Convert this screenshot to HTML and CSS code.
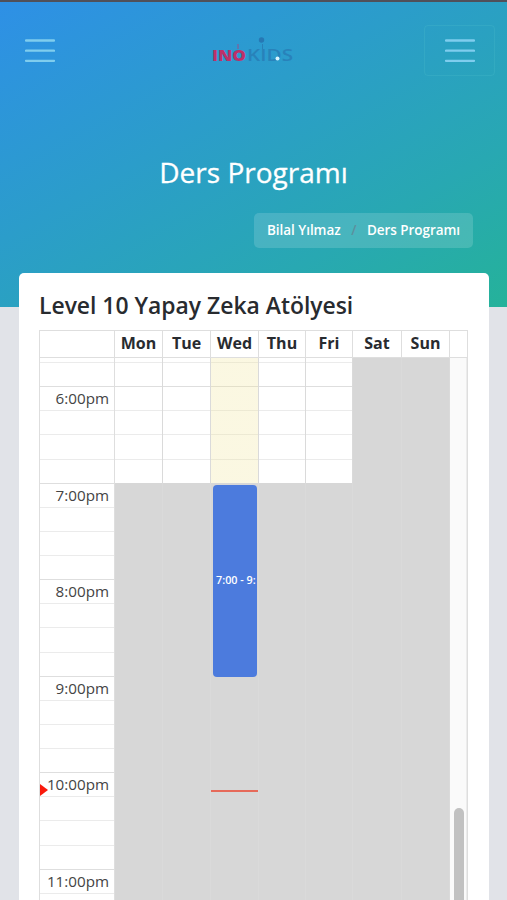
FILE: index.html
```html
<!DOCTYPE html>
<html lang="tr">
<head>
    <meta charset="UTF-8">
    <meta name="viewport" content="width=device-width, initial-scale=1.0">
    <title>Ders Programı</title>
    <link rel="stylesheet" href="styles.css">
</head>
<body>

<header class="hero">
    <nav class="navbar">
        <button class="toggler" aria-label="Menu">
            <svg width="30" height="26" viewBox="0 0 30 26"><path d="M1 2.5H29M1 12.7H29M1 22.8H29"/></svg>
        </button>
        <svg class="logo" width="84" height="28" viewBox="0 0 84 28">
            <text class="logo-ino" x="0" y="23.5" textLength="34" lengthAdjust="spacingAndGlyphs">INO</text>
            <text class="logo-kids" x="35" y="23.5" textLength="46" lengthAdjust="spacingAndGlyphs">KIDS</text>
            <path class="logo-ino-stem" d="M26 7V12"/>
            <path class="logo-kids-stem" d="M50.5 7V12"/>
            <circle class="logo-ball" cx="49.5" cy="3" r="2.7"/>
            <circle class="logo-dot" cx="65.5" cy="21.5" r="2"/>
        </svg>
        <button class="toggler toggler-boxed" aria-label="Menu">
            <svg width="30" height="26" viewBox="0 0 30 26"><path d="M1 2.5H29M1 12.7H29M1 22.8H29"/></svg>
        </button>
    </nav>
    <h1>Ders Programı</h1>
    <div class="breadcrumb">
        <span>Bilal Yılmaz</span>
        <span class="separator">/</span>
        <span>Ders Programı</span>
    </div>
</header>

<main class="card">
    <h2>Level 10 Yapay Zeka Atölyesi</h2>
    <div class="calendar">
        <div class="calendar-head">
            <div></div>
            <div>Mon</div>
            <div>Tue</div>
            <div>Wed</div>
            <div>Thu</div>
            <div>Fri</div>
            <div>Sat</div>
            <div>Sun</div>
            <div></div>
        </div>
        <div class="calendar-body">
            <div class="slots">
                <div class="slot slot-cut"></div>
                <div class="slot"></div>
                <div class="slot hour"><span>6:00pm</span></div>
                <div class="slot"></div>
                <div class="slot"></div>
                <div class="slot"></div>
                <div class="slot hour"><span>7:00pm</span></div>
                <div class="slot"></div>
                <div class="slot"></div>
                <div class="slot"></div>
                <div class="slot hour"><span>8:00pm</span></div>
                <div class="slot"></div>
                <div class="slot"></div>
                <div class="slot"></div>
                <div class="slot hour"><span>9:00pm</span></div>
                <div class="slot"></div>
                <div class="slot"></div>
                <div class="slot"></div>
                <div class="slot hour"><span>10:00pm</span></div>
                <div class="slot"></div>
                <div class="slot"></div>
                <div class="slot"></div>
                <div class="slot hour"><span>11:00pm</span></div>
                <div class="slot"></div>
            </div>
            <div class="days">
                <div class="axis"><i class="now-arrow"></i></div>
                <div class="day"></div>
                <div class="day"></div>
                <div class="day today">
                    <div class="event">7:00 - 9:</div>
                    <i class="now-line"></i>
                </div>
                <div class="day"></div>
                <div class="day"></div>
                <div class="day closed"></div>
                <div class="day closed"></div>
                <div class="scroll-track"><div class="scroll-thumb"></div></div>
            </div>
        </div>
    </div>
</main>

</body>
</html>
```

FILE: styles.css
```css
* {
    box-sizing: border-box;
}

body {
    font-family: "Open Sans", sans-serif;
    margin: 0;
    height: 900px;
    overflow: hidden;
    background-color: #e1e3e8;
    color: #282b2f;
}

.hero {
    height: 307px;
    border-top: 2px solid #50505a;
    background: linear-gradient(150deg, #2e90e6 0%, #2b9dca 40%, #28a8b2 73%, #25b29a 100%);
    color: white;
}

.navbar {
    display: flex;
    justify-content: space-between;
    align-items: center;
    height: 97px;
    padding: 0 12px 0 4px;
}

.toggler {
    display: flex;
    justify-content: center;
    align-items: center;
    width: 71px;
    height: 51px;
    padding: 0;
    background: none;
    border: 1px solid transparent;
    border-radius: 4px;
}

.toggler-boxed {
    border-color: rgba(80, 190, 205, 0.25);
}

.toggler path {
    stroke: #7fcdee;
    stroke-width: 2.3;
    stroke-linecap: round;
}

.logo {
    margin-left: 8px;
    overflow: visible;
}

.logo-ino,
.logo-kids {
    font-size: 16px;
    font-weight: 800;
    fill: #bd3069;
}

.logo-kids {
    font-weight: 600;
    fill: #2882ba;
}

.logo-ino-stem {
    stroke: #96508c;
    stroke-width: 1;
}

.logo-kids-stem {
    stroke: #2880b8;
    stroke-width: 1;
}

.logo-ball {
    fill: #2678b4;
}

.logo-dot {
    fill: #d8f4ff;
}

h1 {
    margin: 54px 0 0;
    font-size: 28px;
    font-weight: 400;
    line-height: 38px;
    text-align: center;
    -webkit-text-stroke: 0.3px white;
}

.breadcrumb {
    display: flex;
    justify-content: space-between;
    align-items: center;
    width: 219px;
    height: 35px;
    margin: 22px 34px 0 auto;
    padding: 0 13px 2px;
    border-radius: 5px;
    background-color: rgba(255, 255, 255, 0.15);
    font-size: 13.5px;
    font-weight: 600;
    letter-spacing: -0.05px;
}

.separator {
    color: #5d8f9c;
}

.card {
    width: 470px;
    height: 640px;
    margin: -34px 0 0 19px;
    padding: 17px 21px 0 20px;
    background: white;
    border-radius: 5px 5px 0 0;
}

h2 {
    margin: 0 0 8px;
    font-size: 22.9px;
    font-weight: 600;
    line-height: 32px;
    white-space: nowrap;
}

.calendar {
    border: 1px solid #dedede;
}

.calendar-head,
.days {
    display: grid;
    grid-template-columns: 75px 48px 48px 48px 47px 47px 49px 48px 1fr;
}

.calendar-head {
    height: 27px;
    border-bottom: 1px solid #dedede;
    font-size: 16px;
    font-weight: 700;
    line-height: 25px;
    text-align: center;
}

.calendar-head div {
    border-right: 1px solid #dedede;
}

.calendar-head div:last-child {
    border-right: none;
}

.calendar-body {
    position: relative;
    height: 560px;
    overflow: hidden;
}

.slot {
    height: 24.14px;
    border-bottom: 1px solid #ebebeb;
    font-size: 15.2px;
    line-height: 22px;
}

.slot-cut {
    height: 5px;
}

/* the line above a full hour is a bit stronger */
.slot:has(+ .hour) {
    border-bottom-color: #dedede;
}

.slot span {
    display: block;
    width: 69px;
    text-align: right;
    color: #444;
}

.days {
    position: absolute;
    inset: 0;
}

.axis,
.day {
    position: relative;
    border-right: 1px solid #dedede;
}

/* hours outside the working day */
.day {
    border-right-color: #dadada;
    background: linear-gradient(#d7d7d7, #d7d7d7) 0 125px no-repeat;
}

.today {
    background: linear-gradient(rgba(240, 228, 150, 0.28) 125px, #d7d7d7 125px);
}

.closed {
    background: #d7d7d7;
}

.event {
    position: absolute;
    top: 127px;
    left: 2px;
    right: 1px;
    height: 192px;
    padding-left: 3px;
    border-radius: 4px;
    background-color: #4c7bdd;
    color: white;
    font-size: 10.8px;
    font-weight: 600;
    line-height: 190px;
    white-space: nowrap;
}

.now-line {
    position: absolute;
    top: 432px;
    left: 0;
    right: 0;
    height: 2px;
    background-color: #e66a5a;
}

.now-arrow {
    position: absolute;
    top: 426px;
    left: 0;
    border: solid transparent;
    border-width: 6.5px 0 6.5px 8px;
    border-left-color: #fa1a0c;
}

.scroll-track {
    background-color: #fafafa;
    border-right: 1px solid #ececec;
}

.scroll-thumb {
    width: 10px;
    height: 200px;
    margin: 450px 0 0 4px;
    border-radius: 5px;
    background-color: #c1c1c1;
}
```
